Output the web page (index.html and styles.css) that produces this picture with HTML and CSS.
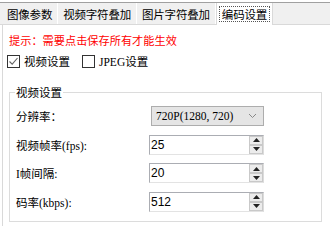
FILE: index.html
```
<!DOCTYPE html>
<html>
<head>
  <meta charset="utf-8">
  <title>编码设置</title>
  <link rel="stylesheet" href="styles.css">
</head>
<body>
  <div class="tab-widget">
    <div class="tab-bar">
      <span class="tab">图像参数</span>
      <span class="tab">视频字符叠加</span>
      <span class="tab">图片字符叠加</span>
      <span class="tab active"><span class="focus">编码设置</span></span>
    </div>

    <div class="pane">
      <p class="hint">提示：需要点击保存所有才能生效</p>

      <div class="checks">
        <label class="check">
          <span class="box">
            <svg width="11" height="11" viewBox="0 0 11 11"><path d="M1.5 5.5 L4.2 8.2 L9.5 2" fill="none" stroke="#666" stroke-width="1.1"/></svg>
          </span>
          视频设置
        </label>
        <label class="check">
          <span class="box"></span>
          JPEG设置
        </label>
      </div>

      <fieldset class="group">
        <legend>视频设置</legend>

        <div class="row">
          <span class="field-label">分辨率：</span>
          <div class="combo">
            <span>720P(1280, 720)</span>
            <svg width="9" height="6" viewBox="0 0 9 6"><path d="M1 1 L4.5 4.5 L8 1" fill="none" stroke="#888" stroke-width="1"/></svg>
          </div>
        </div>

        <div class="row">
          <span class="field-label">视频帧率(fps):</span>
          <div class="spin">
            <span class="value">25</span>
            <div class="spin-buttons">
              <span class="spin-btn"><svg width="7" height="4" viewBox="0 0 7 4"><path d="M0 4 L3.5 0 L7 4 Z" fill="#222"/></svg></span>
              <span class="spin-btn"><svg width="7" height="4" viewBox="0 0 7 4"><path d="M0 0 L3.5 4 L7 0 Z" fill="#222"/></svg></span>
            </div>
          </div>
        </div>

        <div class="row">
          <span class="field-label">I帧间隔:</span>
          <div class="spin">
            <span class="value">20</span>
            <div class="spin-buttons">
              <span class="spin-btn"><svg width="7" height="4" viewBox="0 0 7 4"><path d="M0 4 L3.5 0 L7 4 Z" fill="#222"/></svg></span>
              <span class="spin-btn"><svg width="7" height="4" viewBox="0 0 7 4"><path d="M0 0 L3.5 4 L7 0 Z" fill="#222"/></svg></span>
            </div>
          </div>
        </div>

        <div class="row">
          <span class="field-label">码率(kbps):</span>
          <div class="spin">
            <span class="value">512</span>
            <div class="spin-buttons">
              <span class="spin-btn"><svg width="7" height="4" viewBox="0 0 7 4"><path d="M0 4 L3.5 0 L7 4 Z" fill="#222"/></svg></span>
              <span class="spin-btn"><svg width="7" height="4" viewBox="0 0 7 4"><path d="M0 0 L3.5 4 L7 0 Z" fill="#222"/></svg></span>
            </div>
          </div>
        </div>
      </fieldset>
    </div>
  </div>
</body>
</html>
```

FILE: styles.css
```
html, body {
  margin: 0;
  padding: 0;
  background: #ffffff;
  color: #000;
  font-family: "Liberation Serif", "Noto Sans CJK SC", serif;
  font-size: 12px;
  overflow: hidden;
}

.tab-widget {
  width: 340px;
  padding-top: 2px;
}

/* tab strip */
.tab-bar {
  display: flex;
  height: 21px;
  border-top: 1px solid #a0a0a0;
  border-bottom: 1px solid #d9d9d9;
  background: #f0f0f0;
  padding-left: 2px;
}

.tab {
  display: flex;
  align-items: center;
  padding: 0 5px;
  line-height: 16px;
  border-right: 1px solid #ffffff;
  font-family: "Noto Sans CJK SC", sans-serif;
  font-size: 11.5px;
  letter-spacing: -0.2px;
}

.tab.active {
  background: #ffffff;
  border-left: 1px solid #d9d9d9;
  border-right: 1px solid #d9d9d9;
  margin-bottom: -1px;
  padding: 0 2px;
}

.tab .focus {
  border: 1px dotted #555;
  padding: 0 2px;
  line-height: 14px;
}

/* page */
.pane {
  margin-left: 2px;
  border-left: 1px solid #d9d9d9;
  padding: 7px 0 0 6px;
  height: 200px;
}

.hint {
  margin: 0;
  color: #f00;
  font-family: "Noto Sans CJK SC", sans-serif;
  font-size: 11.2px;
  line-height: 16px;
}

.checks {
  display: flex;
  gap: 12px;
  margin-top: 5px;
  margin-left: -2px;
  height: 16px;
}

.check {
  display: flex;
  align-items: center;
  gap: 4px;
  font-size: 11.5px;
}

.box {
  width: 11px;
  height: 11px;
  border: 1px solid #333;
  background: #fff;
  display: flex;
  align-items: center;
  justify-content: center;
}

/* group box */
.group {
  margin: 15px 0 0 0;
  width: 306px;
  border: 1px solid #dcdcdc;
  padding: 6px 0 9px 5px;
  display: flex;
  flex-direction: column;
  gap: 8.5px;
}

.group legend {
  padding: 0 1px;
  font-family: "Noto Sans CJK SC", sans-serif;
  font-size: 11.5px;
  line-height: 16px;
}

.row {
  display: flex;
  align-items: center;
  height: 20px;
}

.field-label {
  width: 135px;
  padding-left: 1px;
  font-size: 11.5px;
  white-space: nowrap;
}

.combo {
  width: 101px;
  height: 18px;
  border: 1px solid #adadad;
  background: #e5e5e5;
  display: flex;
  align-items: center;
  justify-content: space-between;
  padding: 0 6px 0 4px;
}

.combo span {
  font-size: 11.5px;
}

.spin {
  width: 112px;
  height: 18px;
  border: 1px solid #abadb3;
  border-right-color: #dcdcdc;
  border-bottom-color: #e3e3e3;
  background: #fff;
  display: flex;
  align-items: center;
  justify-content: space-between;
  margin-left: -2px;
  padding-left: 1px;
}

.spin .value {
  font-family: "Liberation Sans", sans-serif;
  font-size: 12px;
}

.spin-buttons {
  display: flex;
  flex-direction: column;
  height: 18px;
  width: 14px;
}

.spin-btn {
  flex: 1;
  display: flex;
  align-items: center;
  justify-content: center;
  background: #ececec;
  border: 1px solid #c9c9c9;
  box-sizing: border-box;
}
```
